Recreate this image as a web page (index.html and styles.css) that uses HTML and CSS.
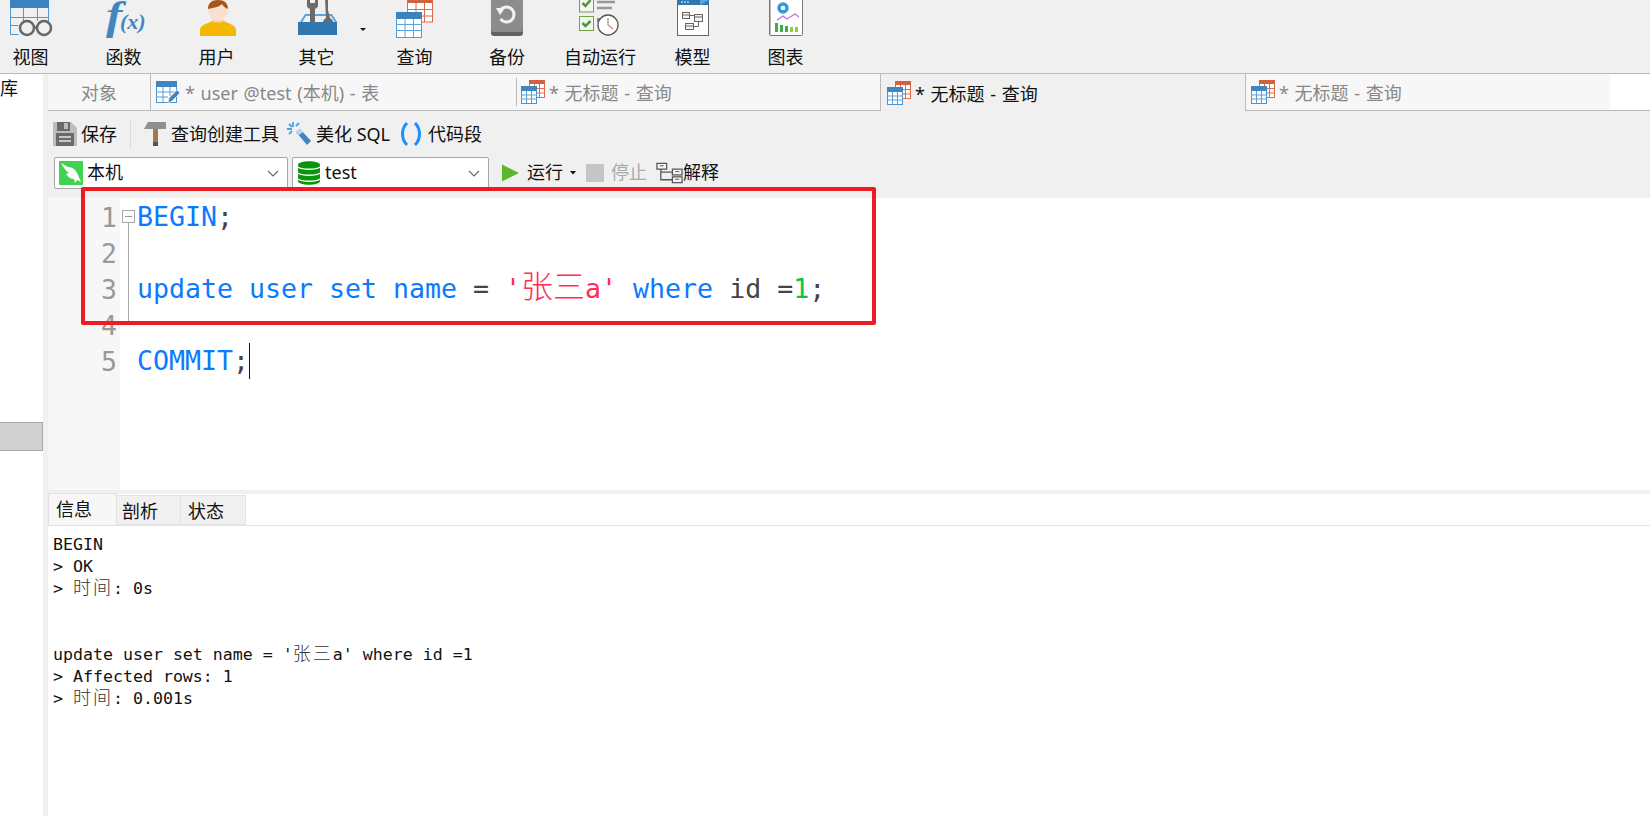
FILE: index.html
```html
<!DOCTYPE html>
<html lang="zh">
<head>
<meta charset="utf-8">
<title>无标题 - 查询</title>
<link rel="stylesheet" href="styles.css">
</head>
<body>
<svg class="defs" width="0" height="0" aria-hidden="true">
  <defs>
    <symbol id="q-small" viewBox="0 0 24 24">
      <rect x="8.5" y="0.5" width="15" height="17" fill="#fff" stroke="#dc6a4c"/>
      <rect x="8" y="0" width="16" height="4" fill="#d2623f"/>
      <path d="M13.5 4v13M18.5 4v13M8 8.5h16M8 13h16" stroke="#dc6a4c" fill="none"/>
      <rect x="0.5" y="6.5" width="15" height="17" fill="#fff" stroke="#4d93cf"/>
      <rect x="0" y="6" width="16" height="5" fill="#3f86c2"/>
      <path d="M5.5 11v12M10.5 11v12M0 15h16M0 19h16" stroke="#5a9fd8" fill="none"/>
    </symbol>
  </defs>
</svg>

<header class="ribbon">
  <div class="tool tool-a">
    <svg class="tool-icon" viewBox="0 0 60 44"><rect x="9" y="0" width="39" height="8" fill="#3b83c0"/><path d="M9.500 8v26.500h8M47.500 8v13M22.500 8v13M36.500 8v13M9.500 17.500h38M9.500 25.500h8" stroke="#4d9ad6" fill="none"/><path d="M33 27.500h5" stroke="#666" stroke-width="2.500"/><circle cx="26" cy="28" r="7" fill="#f0f0f0" stroke="#666" stroke-width="2.500"/><circle cx="43" cy="28" r="7" fill="#f0f0f0" stroke="#666" stroke-width="2.500"/></svg>
    <span class="tool-label">视图</span>
  </div>
  <div class="tool tool-a">
    <svg class="tool-icon" viewBox="0 0 60 44"><text class="fx-f" transform="translate(12 29) scale(1.25 1)">f</text><text class="fx-x" x="26" y="29">(x)</text></svg>
    <span class="tool-label">函数</span>
  </div>
  <div class="tool tool-a">
    <svg class="tool-icon" viewBox="0 0 60 44"><path d="M13 36v-6c0-5 7-6 12-9h12c5 3 12 4 12 9v6c0 0 0 0-2 0H15c-2 0-2 0-2 0z" fill="#f5b800"/><path d="M25 21c2 2 10 2 12 0l-2-3h-8z" fill="#f6cdb4"/><ellipse cx="31" cy="9" rx="10" ry="12" fill="#fbe0cf"/><path d="M21 9c0-6 4-9 10-9s10 3 10 9c-3-1-5-3-6-5-3 3-9 4-14 5z" fill="#a5561c"/></svg>
    <span class="tool-label">用户</span>
  </div>
  <div class="tool tool-b">
    <svg class="tool-icon tool-icon-open" viewBox="0 0 60 44"><path d="M13.500 23l5-8h26l5 8" fill="#f0f0f0" stroke="#5aa5e0" stroke-width="2"/><path d="M20 -2v6a4.500 4.500 0 0 0 3 5v15h5V9a4.500 4.500 0 0 0 3-5v-6h-3v5h-5v-5z" fill="#6b6b6b"/><path d="M38 -2h3v12l2 8c2 1 3 3 3 4H36c0-1 1-3 3-4z" fill="#6b6b6b"/><rect x="11" y="22" width="39" height="13" fill="#2f77ae"/><polygon points="73,28 79,28 76,31" fill="#111"/></svg>
    <span class="tool-label">其它</span>
  </div>
  <div class="tool tool-c">
    <svg class="tool-icon" viewBox="0 0 60 44"><rect x="22.500" y="-3" width="25" height="25" fill="#fff" stroke="#dc6a4c"/><rect x="22" y="-3" width="26" height="6" fill="#d2623f"/><path d="M31 3v19M39.500 3v19M22 9.500h26M22 16h26" stroke="#dc6a4c" fill="none"/><rect x="11.500" y="12.500" width="25" height="25" fill="#fff" stroke="#4d9ad6"/><rect x="11" y="12" width="26" height="7" rx="1" fill="#3b83c0"/><path d="M20 19v18M28.500 19v18M11 24.500h26M11 30.500h26" stroke="#5aa5e0" fill="none"/></svg>
    <span class="tool-label">查询</span>
  </div>
  <div class="tool tool-d">
    <svg class="tool-icon" viewBox="0 0 60 44"><rect x="14" y="-6" width="32" height="42" rx="3" fill="#636363"/><rect x="14" y="-6" width="32" height="38" rx="2" fill="#8c8c8c"/><path d="M23.500 10a7.500 7.500 0 1 1 0 9" fill="none" stroke="#f2f2f2" stroke-width="3"/><polygon points="19,8 28,8 23,15" fill="#f2f2f2"/></svg>
    <span class="tool-label">备份</span>
  </div>
  <div class="tool tool-e">
    <svg class="tool-icon" viewBox="0 0 60 44"><rect x="9.500" y="-4" width="14" height="16" fill="#f5f5f5" stroke="#6da544"/><rect x="9.500" y="16.500" width="14" height="14" fill="#f5f5f5" stroke="#6da544"/><path d="M12.500 3l3 3 5-6M12.500 23l3 3 5-5" fill="none" stroke="#4b9a34" stroke-width="2.500"/><path d="M27 2h18M27 8h15" stroke="#999" stroke-width="2.500"/><rect x="27" y="18" width="4" height="4" fill="#888"/><circle cx="38" cy="25" r="10" fill="#fff" stroke="#555" stroke-width="1.300"/><path d="M38 18v7" stroke="#777"/><path d="M38 25l5 4" stroke="#f07a6a" stroke-width="1.300"/></svg>
    <span class="tool-label">自动运行</span>
  </div>
  <div class="tool tool-f">
    <svg class="tool-icon" viewBox="0 0 60 44"><rect x="14.500" y="-3" width="31" height="38.500" fill="#fff" stroke="#666"/><rect x="14" y="-3" width="32" height="8" fill="#2f77ae"/><polygon points="37,5 46,0 46,-3 37,-3" fill="#5aa5e0"/><path d="M19 1v2M22 1v2M25 1v2" stroke="#fff"/><g fill="#f5f5f5" stroke="#666"><rect x="19.500" y="12.500" width="7" height="6"/><rect x="31.500" y="14.500" width="8" height="7"/><rect x="22.500" y="23.500" width="8" height="6"/></g><path d="M19.500 15h7M31.500 17h8M22.500 26h8" stroke="#666"/><path d="M26.500 15.500h5M35.500 21.500v5h-5" stroke="#666" fill="none"/></svg>
    <span class="tool-label">模型</span>
  </div>
  <div class="tool tool-g">
    <svg class="tool-icon" viewBox="0 0 60 44"><rect x="13.500" y="-3" width="33" height="38.500" rx="1" fill="#fff" stroke="#777"/><path d="M14.500 -3v38" stroke="#bbb"/><circle cx="27" cy="8" r="4" fill="none" stroke="#2f9bd8" stroke-width="3.500"/><path d="M21 20l6-4 4 3 8-5 4 3" fill="none" stroke="#bb77cc" stroke-width="1.300"/><rect x="19" y="23" width="3" height="9" fill="#3fae49"/><rect x="24" y="25" width="3" height="7" fill="#3fae49"/><rect x="29" y="26" width="3" height="6" fill="#3fae49"/><rect x="34" y="27" width="3" height="5" fill="#8fce3f"/><rect x="39" y="27" width="3" height="5" fill="#8fce3f"/></svg>
    <span class="tool-label">图表</span>
  </div>
</header>

<div class="shell">
  <aside class="sidebar">
    <div class="side-title">库</div>
    <div class="side-thumb"></div>
  </aside>

  <main class="work">
    <nav class="tabs">
      <div class="tab tab-object">对象</div>
      <div class="tab tab-doc tab-table">
        <svg class="tab-icon" viewBox="0 0 24 24"><rect x="0.500" y="1.500" width="20" height="21" fill="#fff" stroke="#4d93cf"/><rect x="0" y="1" width="21" height="6" fill="#3f86c2"/><path d="M7 7v15M14 7v9M0 12h21M0 17h12" stroke="#5a9fd8" fill="none"/><path d="M12 23l1-5 8-8 3 3-8 8z" fill="#3f86c2" stroke="#fff" stroke-width="0.600"/></svg>
        <span>* user @test (本机) - 表</span>
      </div>
      <div class="tab tab-doc tab-sep">
        <span class="tab-rule"></span>
        <svg class="tab-icon"><use href="#q-small"/></svg>
        <span>* 无标题 - 查询</span>
      </div>
      <div class="tab tab-doc tab-active">
        <svg class="tab-icon"><use href="#q-small"/></svg>
        <span>* 无标题 - 查询</span>
      </div>
      <div class="tab tab-doc tab-last">
        <svg class="tab-icon"><use href="#q-small"/></svg>
        <span>* 无标题 - 查询</span>
      </div>
      <div class="tabs-rest"></div>
    </nav>

    <div class="actions">
      <svg class="ic ic-save" viewBox="0 0 24 24"><path d="M0 0h18l6 6v18H0z" fill="#bdbdbd"/><rect x="4" y="0" width="13" height="9" fill="#6a6a6a"/><rect x="11" y="1" width="4" height="6" fill="#bdbdbd"/><rect x="3" y="11" width="18" height="13" fill="#6a6a6a"/><path d="M6 15h12M6 19h12" stroke="#e6e6e6" stroke-width="1.500"/></svg>
      <span class="act-label m4">保存</span>
      <span class="sep"></span>
      <svg class="ic ic-hammer" viewBox="0 0 22 24"><path d="M4 0h18v7H0z" fill="#8f8f8f"/><rect x="9" y="7" width="5" height="14" fill="#a5784f"/><rect x="9" y="20" width="5" height="4" fill="#555"/></svg>
      <span class="act-label m5">查询创建工具</span>
      <svg class="ic ic-wand" viewBox="0 0 24 24"><path d="M9 10l4-3 11 12-4 4z" fill="#3f86c2"/><path d="M9 10l4-3 3 3-4 3z" fill="#bcd8ee"/><path d="M6 0v5M0 7h5M2 2l3 3M12 1l-3 3M2 12l3-3" stroke="#4da3e0" stroke-width="1.800"/></svg>
      <span class="act-label m5">美化 SQL</span>
      <svg class="ic ic-parens" viewBox="0 0 22 24"><path d="M7 1C1 7 1 17 7 23M15 1c6 6 6 16 0 22" fill="none" stroke="#1e8fff" stroke-width="3"/></svg>
      <span class="act-label m6">代码段</span>
    </div>

    <div class="connect">
      <div class="combo combo-host">
        <svg class="ic" viewBox="0 0 24 24"><rect width="24" height="24" rx="1" fill="#3fd44f"/><path d="M2 2l7 4c5 0 8 3 10 8l3 7-4-2-2 3-1-4c-3 0-6-2-8-5l3-1c-3-2-6-6-8-10z" fill="#fff"/></svg>
        <span class="combo-text">本机</span>
        <svg class="chev" viewBox="0 0 12 7"><path d="M1 1l5 5 5-5" fill="none" stroke="#666" stroke-width="1.100"/></svg>
      </div>
      <div class="combo combo-db">
        <svg class="ic ic-db" viewBox="0 0 22 24"><path d="M0 4c0-5 22-5 22 0v16c0 5-22 5-22 0z" fill="#0a960a"/><path d="M0 6c3 3 19 3 22 0M0 12c3 3 19 3 22 0M0 18c3 3 19 3 22 0" fill="none" stroke="#fff" stroke-width="1.300"/></svg>
        <span class="combo-text">test</span>
        <svg class="chev" viewBox="0 0 12 7"><path d="M1 1l5 5 5-5" fill="none" stroke="#666" stroke-width="1.100"/></svg>
      </div>
      <svg class="run-icon" viewBox="0 0 18 18"><polygon points="0,0 18,9 0,18" fill="#5cb82a"/></svg>
      <span class="act-label m8">运行</span>
      <svg class="caret" viewBox="0 0 6 4"><polygon points="0,0 6,0 3,3.500" fill="#111"/></svg>
      <span class="stop-icon"></span>
      <span class="act-label m7 muted">停止</span>
      <svg class="explain-icon" viewBox="0 0 28 22"><g fill="#f5f5f5" stroke="#555" stroke-width="1.300"><rect x="1" y="1" width="10" height="6"/><rect x="17" y="7" width="10" height="6"/><rect x="17" y="15" width="10" height="6"/></g><path d="M4 3.500h4M20 9.500h4M20 17.500h4" stroke="#555"/><path d="M5 7v11h12M5 10h12" fill="none" stroke="#555" stroke-width="1.300"/></svg>
      <span class="act-label">解释</span>
    </div>

    <section class="editor">
      <div class="gutter">
        <div>1</div><div>2</div><div>3</div><div>4</div><div>5</div>
      </div>
      <svg class="fold" viewBox="0 0 17 130"><rect x="2.500" y="12.500" width="12" height="12" fill="#fff" stroke="#aaa"/><path d="M5 18.500h7" stroke="#999"/><path d="M8.500 25v100" stroke="#aaa"/></svg>
      <div class="code">
        <div class="line"><span class="kw">BEGIN</span>;</div>
        <div class="line"> </div>
        <div class="line"><span class="kw">update user set name</span> = <span class="str">'<span class="han">张三</span>a'</span> <span class="kw">where</span> id =<span class="num">1</span>;</div>
        <div class="line"> </div>
        <div class="line"><span class="kw">COMMIT</span>;<span class="cursor"></span></div>
      </div>
    </section>

    <div class="splitter"></div>

    <div class="result-tabs">
      <div class="rtab rtab-on">信息</div>
      <div class="rtab rtab-mid">剖析</div>
      <div class="rtab">状态</div>
    </div>

    <div class="output">
      <div class="out">BEGIN</div>
      <div class="out">&gt; OK</div>
      <div class="out">&gt; <span class="han-out">时间</span>: 0s</div>
      <div class="out"> </div>
      <div class="out"> </div>
      <div class="out">update user set name = '<span class="han-out">张三</span>a' where id =1</div>
      <div class="out">&gt; Affected rows: 1</div>
      <div class="out">&gt; <span class="han-out">时间</span>: 0.001s</div>
    </div>

    <div class="callout"></div>
  </main>
</div>
</body>
</html>
```

FILE: styles.css
```css
* { box-sizing: border-box; }
html, body { margin: 0; height: 100%; }
body {
  width: 1650px;
  height: 816px;
  overflow: hidden;
  background: #fff;
  color: #111;
  font-family: "Noto Sans", "Noto Sans CJK SC", sans-serif;
  font-size: 18px;
  display: flex;
  flex-direction: column;
}
.defs { position: absolute; }

/* ribbon */
.ribbon {
  height: 74px;
  flex: none;
  display: flex;
  background: #f0f0f0;
  border-bottom: 1px solid #bbb;
  overflow: hidden;
}
.tool { display: flex; flex-direction: column; align-items: center; flex: none; }
.tool:first-child { margin-left: -16px; }
.tool-a { width: 93px; }
.tool-b { width: 107px; }
.tool-c { width: 89px; }
.tool-d { width: 96px; }
.tool-e { width: 90px; }
.tool-f { width: 95px; }
.tool-g { width: 91px; }
.tool-icon { width: 60px; height: 44px; display: block; flex: none; }
.tool-icon-open { overflow: visible; }
.tool-label { line-height: 26px; height: 26px; white-space: nowrap; font-size: 18px; }
.fx-f { font: italic bold 39px "Liberation Serif", serif; fill: #3f86c2; }
.fx-x { font: italic bold 22px "Liberation Serif", serif; fill: #3f86c2; }

/* shell */
.shell { flex: 1; display: flex; min-height: 0; }
.sidebar { width: 43px; flex: none; background: #fff; }
.side-title { font-size: 18px; line-height: 24px; margin-top: 2px; white-space: nowrap; }
.side-thumb {
  height: 29px;
  margin-top: 322px;
  background: #d0d0d0;
  border: 1px solid #a8a8a8;
  border-left: 0;
}
.work {
  flex: 1;
  min-width: 0;
  margin-left: 5px;
  position: relative;
  display: flex;
  flex-direction: column;
  background: #fff;
  box-shadow: -5px 0 0 #f0f0f0;
}

/* document tabs */
.tabs { height: 37px; flex: none; display: flex; border-bottom: 1px solid #bbb; }
.tab {
  height: 36px;
  flex: none;
  display: flex;
  align-items: center;
  background: #f7f7f7;
  color: #888;
  white-space: nowrap;
  font-size: 18px;
  word-spacing: 1px;
}
.tab-object { width: 102px; justify-content: center; }
.tab-doc { gap: 4px; padding-left: 6px; }
.tab-table { width: 366px; padding-left: 5px; gap: 5px; border-left: 1px solid #bbb; }
.tab-sep { width: 364px; padding-left: 0; }
.tab-rule { width: 1px; height: 28px; background: #bbb; flex: none; }
.tab-active {
  width: 366px;
  height: 37px;
  background: #f0f0f0;
  color: #111;
  border-left: 1px solid #bbb;
  border-right: 1px solid #bbb;
  padding-left: 6px;
}
.tab-last { width: 364px; padding-left: 5px; }
.tabs-rest { flex: 1; }
.tab-icon { width: 24px; height: 24px; flex: none; }

/* action rows */
.actions, .connect { display: flex; flex: none; background: #f0f0f0; align-items: center; white-space: nowrap; }
.actions { height: 46px; padding-left: 5px; }
.connect { height: 41px; padding: 0 0 9px 6px; }
.connect .act-label { padding-bottom: 2px; }
.ic { width: 24px; height: 24px; flex: none; }
.act-label { font-size: 18px; line-height: 26px; flex: none; }
.m4 { margin-left: 4px; }
.m5 { margin-left: 5px; }
.m6 { margin-left: 6px; }
.m7 { margin-left: 7px; }
.m8 { margin-left: 8px; }
.muted { color: #aaa; }
.sep { width: 1px; height: 29px; background: #dcdcdc; margin-left: 13px; flex: none; }
.ic-hammer { width: 22px; margin-left: 13px; }
.ic-wand { margin-left: 8px; }
.ic-parens { width: 22px; margin-left: 10px; }

.combo {
  height: 32px;
  flex: none;
  display: flex;
  align-items: center;
  background: #fff;
  border: 1px solid #a5a5a5;
  border-radius: 2px;
  padding-left: 4px;
}
.combo-host { width: 234px; }
.combo-db { width: 197px; margin-left: 4px; padding-left: 5px; }
.ic-db { width: 22px; }
.combo-text { margin-left: 4px; font-size: 18px; line-height: 26px; flex: 1; padding-bottom: 2px; }
.combo-db .combo-text { margin-left: 5px; }
.chev { width: 12px; height: 7px; margin-right: 8px; flex: none; }
.run-icon { width: 17px; height: 18px; margin-left: 13px; flex: none; }
.caret { width: 6px; height: 4px; margin-left: 7px; flex: none; }
.stop-icon { width: 18px; height: 18px; background: #c5c5c5; margin-left: 10px; flex: none; }
.explain-icon { width: 27px; height: 22px; margin-left: 9px; flex: none; }

/* editor */
.editor { height: 292px; flex: none; display: flex; background: #fff; }
.gutter {
  width: 72px;
  flex: none;
  background: #f7f7f7;
  padding: 2px 3px 0 0;
  text-align: right;
  color: #999;
  font-family: "DejaVu Sans Mono", monospace;
  font-size: 26.5px;
  line-height: 36px;
}
.fold { width: 17px; height: 130px; flex: none; }
.code {
  padding-top: 1px;
  font-family: "DejaVu Sans Mono", "Noto Sans CJK SC", monospace;
  font-size: 26.58px;
  line-height: 36px;
  color: #444;
}
.line { height: 36px; white-space: pre; }
.kw { color: #0a7aff; }
.str { color: #ff2d55; }
.num { color: #0ac24a; }
.han { font-family: "Noto Sans CJK SC", sans-serif; font-weight: 300; font-size: 32px; line-height: 0; }
.cursor { display: inline-block; width: 1px; height: 36px; background: #111; vertical-align: top; }

.splitter { height: 4px; flex: none; background: #f0f0f0; }

/* result tabs */
.result-tabs { height: 32px; flex: none; display: flex; align-items: flex-end; border-bottom: 1px solid #e3e3e3; }
.rtab {
  height: 30px;
  width: 65px;
  flex: none;
  background: #f0f0f0;
  border: 1px solid #e3e3e3;
  border-left: 0;
  padding-left: 7px;
  line-height: 31px;
  font-size: 18px;
  white-space: nowrap;
}
.rtab-mid { width: 64px; padding-left: 5px; }
.rtab-on {
  width: 69px;
  height: 32px;
  background: #f7f7f7;
  border-left: 1px solid #e3e3e3;
  border-bottom: 0;
  padding-left: 7px;
  line-height: 31px;
}

/* output */
.output {
  padding: 8px 0 0 5px;
  font-family: "DejaVu Sans Mono", "Noto Sans CJK SC", monospace;
  font-size: 16.6px;
  line-height: 22px;
  color: #111;
}
.out { height: 22px; white-space: pre; }
.han-out { font-family: "Noto Sans CJK SC", sans-serif; font-weight: 300; font-size: 18px; letter-spacing: 2px; line-height: 0; color: #333; }

/* red annotation over the editor */
.callout {
  position: absolute;
  left: 33px;
  top: 113px;
  width: 795px;
  height: 138px;
  border: 4px solid #ed1c24;
  border-radius: 2px;
}
```
